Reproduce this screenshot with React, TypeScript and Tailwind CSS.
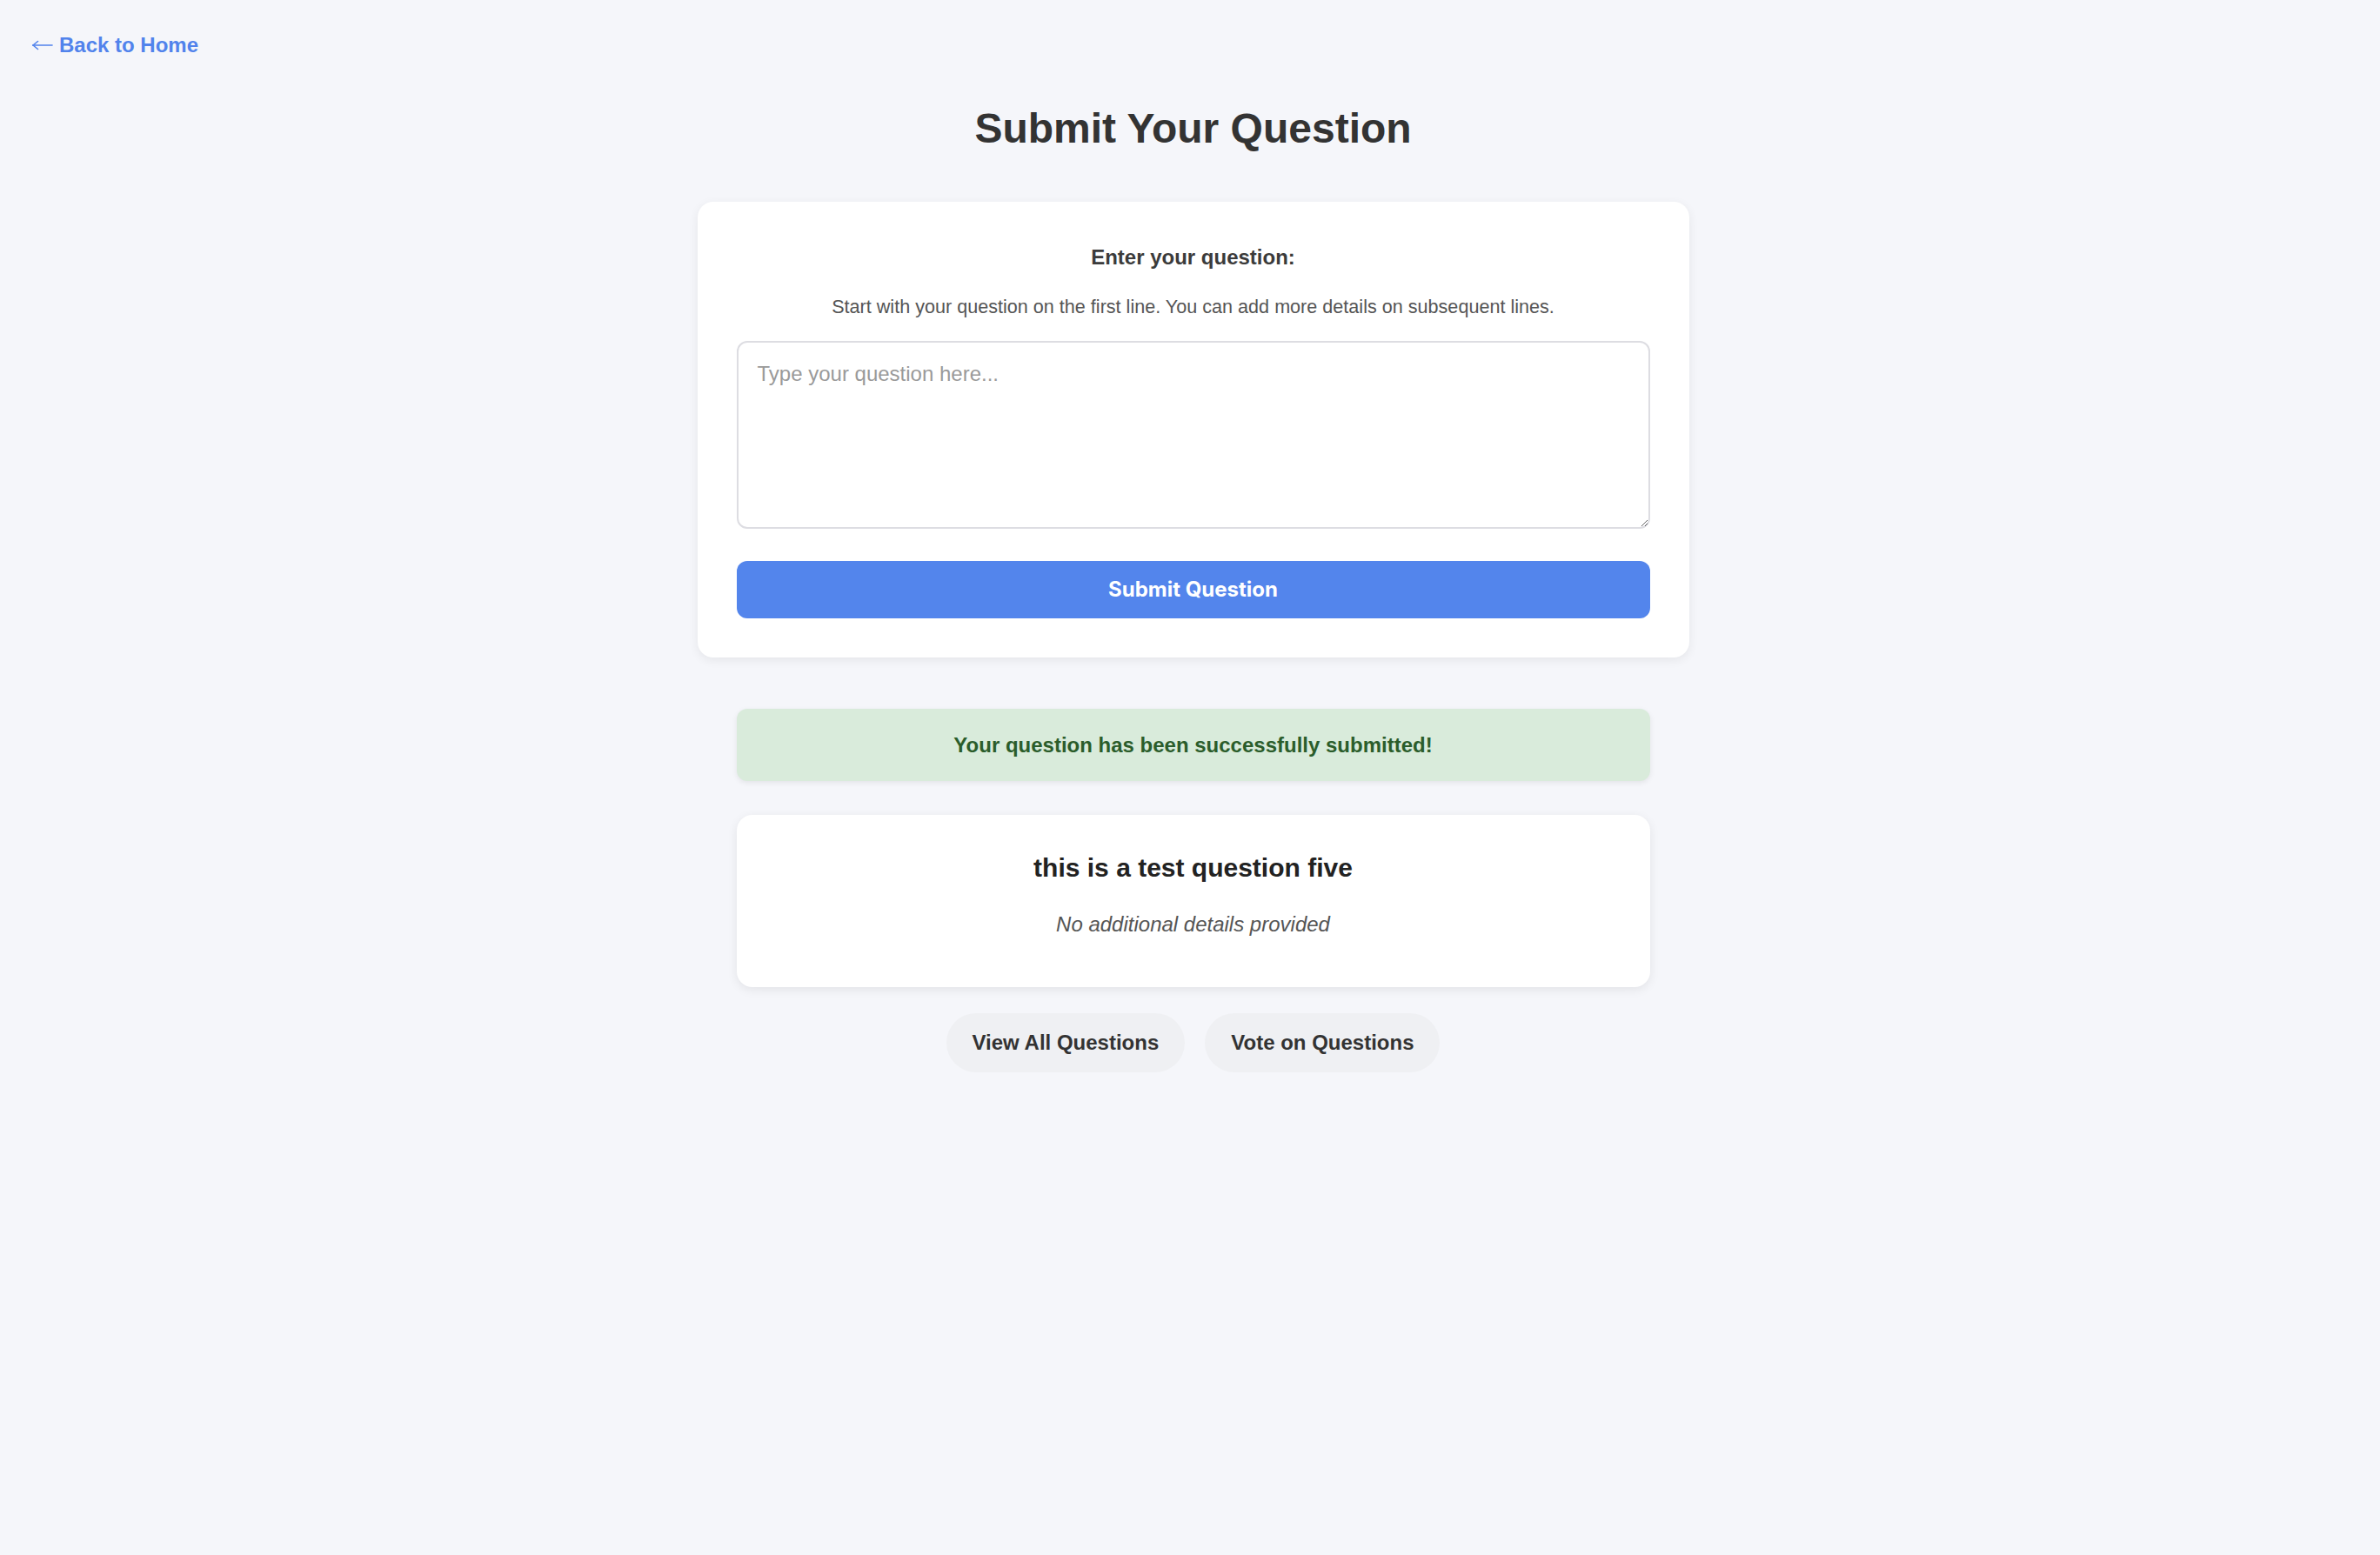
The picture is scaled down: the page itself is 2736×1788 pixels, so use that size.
import React from "react";

export default function App() {
  return (
    <div
      className="min-h-screen w-full bg-[#f5f6fa] text-[#333]"
      style={{ fontFamily: '"Liberation Sans", Arial, Helvetica, sans-serif' }}
    >
      <div className="pl-[37px] pt-[38px]">
        <a href="#" className="inline-flex items-center text-[24px] font-bold leading-[27.6px] text-[#5183ec] no-underline">
          <svg width="24" height="12" viewBox="0 0 24 12" className="mr-[7px] mt-[1px]" fill="none" stroke="#5183ec" strokeWidth="1.6" strokeLinecap="round">
            <path d="M1 6 H23" />
            <path d="M1 6 L6.5 1.5" />
            <path d="M1 6 L6.5 10.5" />
          </svg>
          <span>Back to Home</span>
        </a>
      </div>

      <main className="flex flex-col items-center pl-[7px]">
        <h1 className="mt-[54px] text-[48px] font-bold leading-[55px] text-[#333]">
          Submit Your Question
        </h1>

        <section className="mt-[57px] w-[1140px] rounded-[18px] bg-white px-[45px] pb-[45px] pt-[50px] shadow-[0_3px_12px_rgba(0,0,0,0.07)]">
          <div className="text-center text-[24px] font-bold leading-[27.6px] text-[#3b3b3b]">
            Enter your question:
          </div>
          <p className="mt-[31px] text-center text-[21.6px] leading-[25px] text-[#555]">
            Start with your question on the first line. You can add more details on subsequent lines.
          </p>
          <textarea
            className="mt-[27px] block h-[216px] w-full rounded-[12px] border-2 border-[#dddde2] bg-white px-[22px] py-[22px] text-[24px] leading-[27.6px] text-[#333] outline-none placeholder:text-[#9a9a9a]"
            placeholder="Type your question here..."
          />
          <button
            className="mt-[37px] flex h-[66px] w-full items-center justify-center rounded-[12px] bg-[#5385ec] text-[24px] font-bold text-white"
            style={{ fontFamily: 'Inter, "Liberation Sans", sans-serif' }}
          >
            Submit Question
          </button>
        </section>

        <div className="mt-[59px] flex h-[83px] w-[1050px] items-center justify-center rounded-[12px] bg-[#d9ebdb] shadow-[0_2px_6px_rgba(0,0,0,0.08)]">
          <span className="text-[24px] font-bold leading-[27.6px] text-[#2b5d2b]">
            Your question has been successfully submitted!
          </span>
        </div>

        <div className="mt-[39px] flex h-[198px] w-[1050px] flex-col items-center rounded-[18px] bg-white pt-[44px] shadow-[0_3px_12px_rgba(0,0,0,0.08)]">
          <h2 className="text-[30px] font-bold leading-[34.5px] text-[#222]">
            this is a test question five
          </h2>
          <p className="mt-[33px] text-[24px] italic leading-[27.6px] text-[#555]">
            No additional details provided
          </p>
        </div>

        <div className="mt-[30px] flex gap-[23px]">
          <button className="h-[68px] rounded-full bg-[#eff0f3] px-[30px] text-[24px] font-bold text-[#333]">
            View All Questions
          </button>
          <button className="h-[68px] rounded-full bg-[#eff0f3] px-[30px] text-[24px] font-bold text-[#333]">
            Vote on Questions
          </button>
        </div>
      </main>
    </div>
  );
}
